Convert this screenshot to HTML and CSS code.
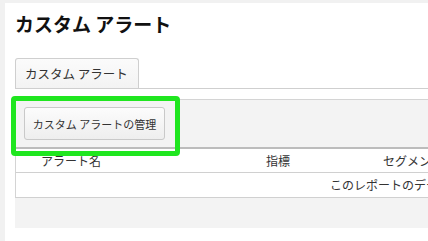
FILE: index.html
```html
<!DOCTYPE html>
<html lang="ja">
<head>
<meta charset="utf-8">
<link rel="stylesheet" href="styles.css">
</head>
<body>
<div class="page">
  <h1 class="title">カスタム アラート</h1>
  <div class="tabs">
    <div class="tab">カスタム アラート</div>
  </div>
  <div class="panel">
    <div class="toolbar">
      <button class="btn">カスタム アラートの管理</button>
      <div class="highlight"></div>
    </div>
    <div class="table">
      <div class="thead">
        <div class="col c1">アラート名</div>
        <div class="col c2">指標</div>
        <div class="col c3">セグメント</div>
      </div>
      <div class="row">
        <div class="empty">このレポートのデータはありません。</div>
      </div>
      <div class="tfoot"></div>
    </div>
  </div>
</div>
</body>
</html>
```

FILE: styles.css
```css
html, body {
  margin: 0;
  padding: 0;
  height: 100%;
  overflow: hidden;
}
body {
  background: #f1f1f1;
  font-family: "Noto Sans CJK JP", "Noto Sans", sans-serif;
  color: #333;
}
.page {
  margin: 3px 0 0 5px;
  padding: 9px 0 0 10px;
  background: #fff;
  height: 100%;
  width: 900px;
}
.title {
  margin: 0;
  font-size: 19px;
  line-height: 24px;
  font-weight: bold;
  color: #111;
  letter-spacing: 0;
}
.tabs {
  margin-top: 22px;
  border-bottom: 1px solid #cfcfcf;
  display: flex;
}
.tab {
  height: 29px;
  width: 122px;
  border: 1px solid #cfcfcf;
  border-bottom: none;
  border-radius: 3px 3px 0 0;
  background: linear-gradient(#fbfbfb, #f3f3f3);
  font-size: 12.5px;
  line-height: 29px;
  padding-left: 9px;
  box-sizing: content-box;
  width: 113px;
  color: #333;
}
.panel {
  margin-top: 10px;
}
.toolbar {
  position: relative;
  border-top: 1px solid #d4d4d4;
  border-left: 1px solid #d4d4d4;
  background: #f3f3f3;
  padding: 7px 8px;
  height: 33px;
}
.btn {
  height: 33px;
  width: 141px;
  padding: 0;
  margin: 0;
  border: 1px solid #c9c9c9;
  border-radius: 3px;
  background: linear-gradient(#fcfcfc, #eeeeee);
  font-family: "Noto Sans CJK JP", "Noto Sans", sans-serif;
  font-size: 11px;
  color: #333;
  text-align: center;
}
.highlight {
  position: absolute;
  left: -5px;
  top: -4px;
  width: 169px;
  height: 60px;
  box-sizing: border-box;
  border: 5px solid #1fe61f;
  border-radius: 4px;
}
.table {
  border-top: 2px solid #bcbcbc;
}
.thead, .row {
  display: flex;
  border-left: 1px solid #d4d4d4;
  border-bottom: 1px solid #d0d0d0;
  background: #fff;
  font-size: 12px;
  color: #333;
}
.thead {
  height: 23px;
  line-height: 23px;
}
.col.c1 { width: 225px; padding-left: 25px; box-sizing: border-box; }
.col.c2 { width: 117px; padding-left: 25px; box-sizing: border-box; }
.col.c3 { padding-left: 25px; }
.row {
  height: 24px;
  line-height: 24px;
}
.empty {
  padding-left: 314px;
  white-space: nowrap;
}
.tfoot {
  height: 30px;
  background: #f3f3f3;
}
```
